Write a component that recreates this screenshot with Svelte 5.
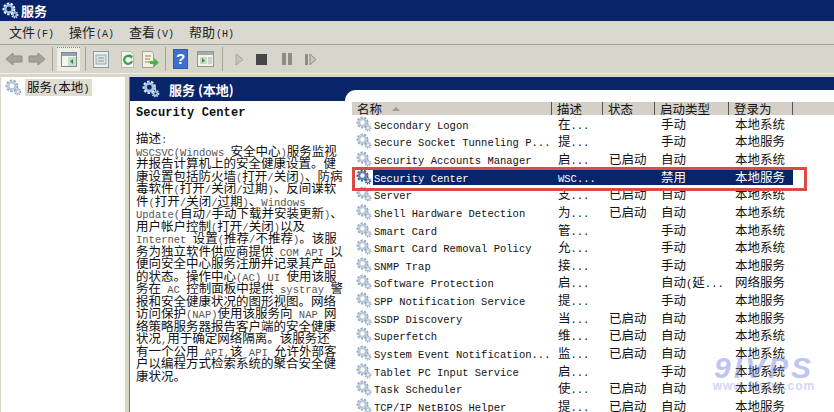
<script>
  const menus = [['文件', 'F'], ['操作', 'A'], ['查看', 'V'], ['帮助', 'H']]

  const description = [
    '描述:',
    'WSCSVC(Windows 安全中心)服务监视',
    '并报告计算机上的安全健康设置。健',
    '康设置包括防火墙(打开/关闭)、防病',
    '毒软件(打开/关闭/过期)、反间谍软',
    '件(打开/关闭/过期)、Windows',
    'Update(自动/手动下载并安装更新)、',
    '用户帐户控制(打开/关闭)以及',
    'Internet 设置(推荐/不推荐)。该服',
    '务为独立软件供应商提供 COM API 以',
    '便向安全中心服务注册并记录其产品',
    '的状态。操作中心(AC) UI 使用该服',
    '务在 AC 控制面板中提供 systray 警',
    '报和安全健康状况的图形视图。网络',
    '访问保护(NAP)使用该服务向 NAP 网',
    '络策略服务器报告客户端的安全健康',
    '状况,用于确定网络隔离。该服务还',
    '有一个公用 API,该 API 允许外部客',
    '户以编程方式检索系统的聚合安全健',
    '康状况。'
  ]

  const services = [
    ['Secondary Logon', '在...', '', '手动', '本地系统'],
    ['Secure Socket Tunneling P...', '提...', '', '手动', '本地服务'],
    ['Security Accounts Manager', '启...', '已启动', '自动', '本地系统'],
    ['Security Center', 'WSC...', '', '禁用', '本地服务'],
    ['Server', '支...', '已启动', '自动', '本地系统'],
    ['Shell Hardware Detection', '为...', '已启动', '自动', '本地系统'],
    ['Smart Card', '管...', '', '手动', '本地系统'],
    ['Smart Card Removal Policy', '允...', '', '手动', '本地系统'],
    ['SNMP Trap', '接...', '', '手动', '本地服务'],
    ['Software Protection', '启...', '', '自动(延...', '网络服务'],
    ['SPP Notification Service', '提...', '', '手动', '本地服务'],
    ['SSDP Discovery', '当...', '已启动', '自动', '本地服务'],
    ['Superfetch', '维...', '已启动', '自动', '本地系统'],
    ['System Event Notification...', '监...', '已启动', '自动', '本地系统'],
    ['Tablet PC Input Service', '启...', '', '手动', '本地系统'],
    ['Task Scheduler', '使...', '已启动', '自动', '本地系统'],
    ['TCP/IP NetBIOS Helper', '提...', '已启动', '自动', '本地服务']
  ]

  // latin text is set smaller than the CJK around it
  function parts(text) {
    return text.split(/([\x00-\x7f]+)/).filter(Boolean).map((t) => ({ t, latin: /^[\x00-\x7f]/.test(t) }))
  }
</script>

{#snippet gear(size, tone)}
  <svg class="gear {tone}" width={size} height={size} viewBox="0 0 16 16">
    <circle class="teeth" cx="6.5" cy="6.5" r="5" />
    <circle class="ring" cx="6.5" cy="6.5" r="3.4" />
    <circle class="teeth small" cx="12" cy="12" r="2.7" />
    <circle class="ring small" cx="12" cy="12" r="1.6" />
  </svg>
{/snippet}

{#snippet mixed(text)}
  {#each parts(text) as p}<span class={p.latin ? 'lat' : 'cjk'}>{p.t}</span>{/each}
{/snippet}

<div class="window">
  <div class="titlebar">
    {@render gear(17, 'title-gear')}
    <span>服务</span>
  </div>

  <div class="menubar">
    {#each menus as [label, key]}
      <div class="menu">{label} <small>({key})</small></div>
    {/each}
  </div>

  <div class="toolbar">
    <svg class="tool t0" width="18" height="16" viewBox="0 0 18 16"><path d="M1 8l7-6v3h9v6H8v3z" fill="#a3a39c" stroke="#8d8d87"/></svg>
    <svg class="tool t00" width="18" height="16" viewBox="0 0 18 16"><path d="M17 8l-7-6v3H1v6h9v3z" fill="#a3a39c" stroke="#8d8d87"/></svg>
    <i class="sep"></i>
    <div class="pressed">
      <svg width="16" height="15" viewBox="0 0 16 15"><rect x=".5" y=".5" width="15" height="14" fill="#f4f6f2" stroke="#7d8c90"/><rect x="1" y="1" width="14" height="3" fill="#8fa3b0"/><rect x="7" y="5" width="8" height="9" fill="#c7dccb"/><path d="M12 7v5l-3-2.500z" fill="#3c8a4a"/></svg>
    </div>
    <i class="sep"></i>
    <svg class="tool t1" width="16" height="17" viewBox="0 0 16 17"><rect x=".5" y=".5" width="15" height="16" fill="#eef1ee" stroke="#8a9aa0"/><rect x="3" y="4" width="10" height="9" fill="#dbe3e2" stroke="#9aa7ac"/><path d="M5 7h6M5 10h6" stroke="#8a979c"/></svg>
    <svg class="tool t2" width="15" height="17" viewBox="0 0 15 17"><path d="M1.500.5h9l3 3v13h-12z" fill="#f4f6f0" stroke="#b5bcb0"/><path d="M11 6a4 4 0 1 0 1 4" fill="none" stroke="#3d9a52" stroke-width="2.200"/><path d="M9 3l4 2-2 3z" fill="#3d9a52"/></svg>
    <svg class="tool t3" width="18" height="17" viewBox="0 0 18 17"><path d="M1.500.5h9l2 2v14h-11z" fill="#f4f1e2" stroke="#a5a592"/><path d="M4 5h6M4 8h5M4 11h5" stroke="#8b7f66"/><path d="M9 10h4V7l5 4.500-5 4.500v-3H9z" fill="#4faf48"/></svg>
    <i class="sep s2"></i>
    <svg class="tool t4" width="15" height="20" viewBox="0 0 15 20"><rect width="15" height="20" fill="#2d5cb8"/><rect x="1" y="1" width="13" height="18" fill="#3f6fcb"/><text x="7.500" y="15" class="q">?</text></svg>
    <svg class="tool t5" width="17" height="16" viewBox="0 0 17 16"><rect x=".5" y=".5" width="16" height="15" fill="#f1f2ea" stroke="#8b9a90"/><rect x="1" y="1" width="15" height="3" fill="#a4ada6"/><rect x="3" y="6" width="7" height="7" fill="#c9dcc8"/><path d="M5 7v5l3-2.500z" fill="#3c8a4a"/><path d="M12 6v7M14 6v7" stroke="#a9b3ac"/></svg>
    <i class="sep s3"></i>
    <svg class="tool t6" width="9" height="13" viewBox="0 0 9 13"><path d="M1 1l7 5.500L1 12z" fill="#c4c4bc" stroke="#a6a69e"/></svg>
    <div class="stop"></div>
    <svg class="tool t7" width="10" height="12" viewBox="0 0 10 12"><path d="M0 0h4v12H0zM6 0h4v12H6z" fill="#8d8d88"/></svg>
    <svg class="tool t8" width="12" height="13" viewBox="0 0 12 13"><path d="M0 1h3v11H0z" fill="#8d8d88"/><path d="M5 1l6 5.500L5 12z" fill="#c4c4bc" stroke="#8d8d88"/></svg>
  </div>

  <div class="panes">
    <div class="tree">
      {@render gear(17, 'pale')}
      <span class="tree-label">{@render mixed('服务(本地)')}</span>
    </div>
    <div class="gutter"></div>

    <div class="detail">
      <div class="left">
        <div class="band">
          {@render gear(18, 'band-gear')}
          <span>服务 (本地)</span>
        </div>
        <div class="info">
          <h1>Security Center</h1>
          <div class="lines">
            {#each description as line}
              <div class="line">{@render mixed(line)}</div>
            {/each}
          </div>
        </div>
      </div>

      <div class="right">
        <div class="list">
          <div class="head">
            <div class="h-name">名称 <b class="arrow"></b></div>
            <div>描述</div>
            <div>状态</div>
            <div>启动类型</div>
            <div>登录为</div>
          </div>
          <div class="rows">
            {#each services as row}
              <div class="row" class:selected={row[0] === 'Security Center'}>
                <div class="ico">{@render gear(16, row[0] === 'Security Center' ? 'dark' : 'pale')}</div>
                {#each row as cell}
                  <div class="cell">{@render mixed(cell)}</div>
                {/each}
              </div>
            {/each}
          </div>
        </div>
      </div>
    </div>
  </div>

  <div class="redbox"></div>
  <div class="mark">
    <div class="mark-big">9IVPS</div>
    <div class="mark-small">www.9ivps.com</div>
  </div>
</div>

<style>
  :global(body) {
    margin: 0;
    background: #fff;
  }

  .window {
    position: relative;
    width: 834px;
    height: 412px;
    overflow: hidden;
    background: #d8d5cb;
    font-family: "Noto Sans CJK SC", sans-serif;
    font-size: 12.5px;
    color: #111;
  }

  .titlebar {
    height: 21px;
    background: #0a246a;
    color: #fff;
    display: flex;
    align-items: center;
    gap: 2px;
    padding-left: 2px;
    font-size: 13px;
    font-weight: 700;
  }

  .menubar {
    height: 22px;
    margin-top: 1px;
    display: flex;
    align-items: center;
    padding-left: 9px;
    font-size: 13px;
    color: #222;
    border-bottom: 1px solid #a5a39a;
    background: #dbd8cf;
  }

  .menu {
    width: 60px;
    white-space: nowrap;
    line-height: 22px;
  }

  .menu small {
    font-family: "Liberation Mono", monospace;
    font-size: 10px;
    margin-left: -2px;
  }

  .toolbar {
    height: 28px;
    display: flex;
    align-items: center;
    padding-left: 5px;
    border-bottom: 1px solid #f0efe8;
    margin-bottom: 3px;
  }

  .tool {
    flex: none;
  }

  .tool.t0 { margin-right: 5px; }
  .tool.t00 { margin-right: 6px; }
  .tool.t1 { margin: 0 11px 0 3px; }
  .tool.t2 { margin-right: 6px; }
  .tool.t4 { margin: 0 9px 0 7px; }
  .tool.t6 { margin: 0 12px; }
  .tool.t7 { margin: 0 13px 0 15px; }

  .q {
    fill: #fff;
    font: 700 15px "Liberation Sans", sans-serif;
    text-anchor: middle;
  }

  .sep {
    flex: none;
    width: 1px;
    height: 24px;
    background: #a6a49b;
    margin-right: 4px;
  }

  .sep.s2 { margin: 0 0 0 6px; }
  .sep.s3 { margin: 0 0 0 8px; }

  .pressed {
    flex: none;
    width: 23px;
    height: 24px;
    background: #eeede6;
    border-top: 1px dotted #888;
    box-sizing: border-box;
    display: flex;
    align-items: center;
    justify-content: center;
    margin-right: 5px;
  }

  .stop {
    flex: none;
    width: 11px;
    height: 11px;
    background: #46464a;
  }

  .panes {
    display: flex;
    height: 337px;
  }

  .tree {
    flex: none;
    width: 124px;
    margin-left: 1px;
    background: #fff;
    display: flex;
    align-items: flex-start;
    gap: 3px;
    padding: 2px 0 0 4px;
    box-sizing: border-box;
  }

  .tree-label {
    background: #dedcd3;
    padding: 0 2px;
    height: 17px;
    line-height: 16px;
    white-space: nowrap;
  }

  .gutter {
    flex: none;
    width: 4px;
    background: #d8d5cb;
    border-right: 1px solid #77766f;
  }

  .detail {
    flex: 1;
    display: flex;
    min-width: 0;
  }

  .left {
    flex: none;
    width: 215px;
    background: #fff;
  }

  .band {
    height: 24px;
    background: #0a246a;
    color: #fff;
    display: flex;
    align-items: center;
    gap: 9px;
    padding-left: 12px;
    font-size: 13px;
    font-weight: 700;
    white-space: nowrap;
  }

  .info {
    padding: 5px 0 0 6px;
  }

  h1 {
    margin: 0;
    font: 700 12px/14px "Liberation Mono", monospace;
    letter-spacing: .1px;
  }

  .lines {
    margin-top: 12px;
  }

  .line {
    height: 12.5px;
    line-height: 12.5px;
    white-space: nowrap;
  }

  .lat {
    font-family: "Liberation Mono", monospace;
    font-size: 10.5px;
  }

  .line .lat {
    color: #555;
  }

  .right {
    flex: 1;
    min-width: 0;
    background: linear-gradient(#0a246a 24px, #fff 24px);
  }

  .list {
    margin-top: 13px;
    height: 324px;
    background: #fff;
    border-top-left-radius: 11px;
    padding: 12px 0 0 7px;
    box-sizing: border-box;
  }

  .head {
    display: grid;
    grid-template-columns: 200px 51px 52px 74px 64px 1fr;
    height: 13px;
    background: #d4d0c8;
    line-height: 13px;
    white-space: nowrap;
  }

  .head > div {
    padding-left: 5px;
    border-right: 1px solid #55544f;
    box-sizing: border-box;
  }

  .h-name {
    display: flex;
    align-items: center;
    gap: 10px;
  }

  .arrow {
    width: 0;
    height: 0;
    border: 4px solid transparent;
    border-top: 0;
    border-bottom: 4px solid #9b9a94;
  }

  .rows {
    height: 298px;
    overflow: hidden;
  }

  .row {
    display: grid;
    grid-template-columns: 21px 179px 51px 52px 74px 64px;
    height: 17.625px;
    align-items: center;
    white-space: nowrap;
  }

  .ico {
    display: flex;
    padding-left: 4px;
  }

  .cell {
    height: 16px;
    line-height: 16px;
    padding-left: 1px;
  }

  .cell:nth-child(n + 3) {
    padding-left: 6px;
  }

  .selected .cell {
    background: #0a246a;
    color: #fff;
  }

  .gear circle {
    fill: none;
  }

  .gear {
    flex: none;
  }

  .teeth {
    stroke: #93a9c4;
    stroke-width: 2;
    stroke-dasharray: 2.2 1.3;
  }

  .ring {
    stroke: #b9c7d6;
    stroke-width: 2.4;
  }

  .teeth.small {
    stroke-width: 1.4;
    stroke-dasharray: 1.2 .8;
  }

  .ring.small {
    stroke-width: 1.4;
  }

  .dark .teeth { stroke: #3c5f92; }
  .dark .ring { stroke: #5f7fae; }

  .title-gear .teeth { stroke: #fff; }
  .title-gear .ring { stroke: #9fc0e8; }

  .band-gear .teeth { stroke: #dbe6f4; }
  .band-gear .ring { stroke: #a8c3e4; }

  .redbox {
    position: absolute;
    left: 352px;
    top: 167px;
    width: 455px;
    height: 24px;
    box-sizing: border-box;
    border: 3px solid #db4a45;
    pointer-events: none;
  }

  .mark {
    position: absolute;
    left: 710px;
    top: 355px;
    width: 108px;
    text-align: center;
    opacity: .45;
    color: #6f81df;
    font-family: "Liberation Sans", sans-serif;
    font-weight: 700;
    pointer-events: none;
  }

  .mark-big {
    font-size: 30px;
    line-height: 25px;
    font-style: italic;
    letter-spacing: 3px;
  }

  .mark-small {
    font-size: 12px;
    line-height: 12px;
    opacity: .7;
    letter-spacing: 1px;
  }
</style>
